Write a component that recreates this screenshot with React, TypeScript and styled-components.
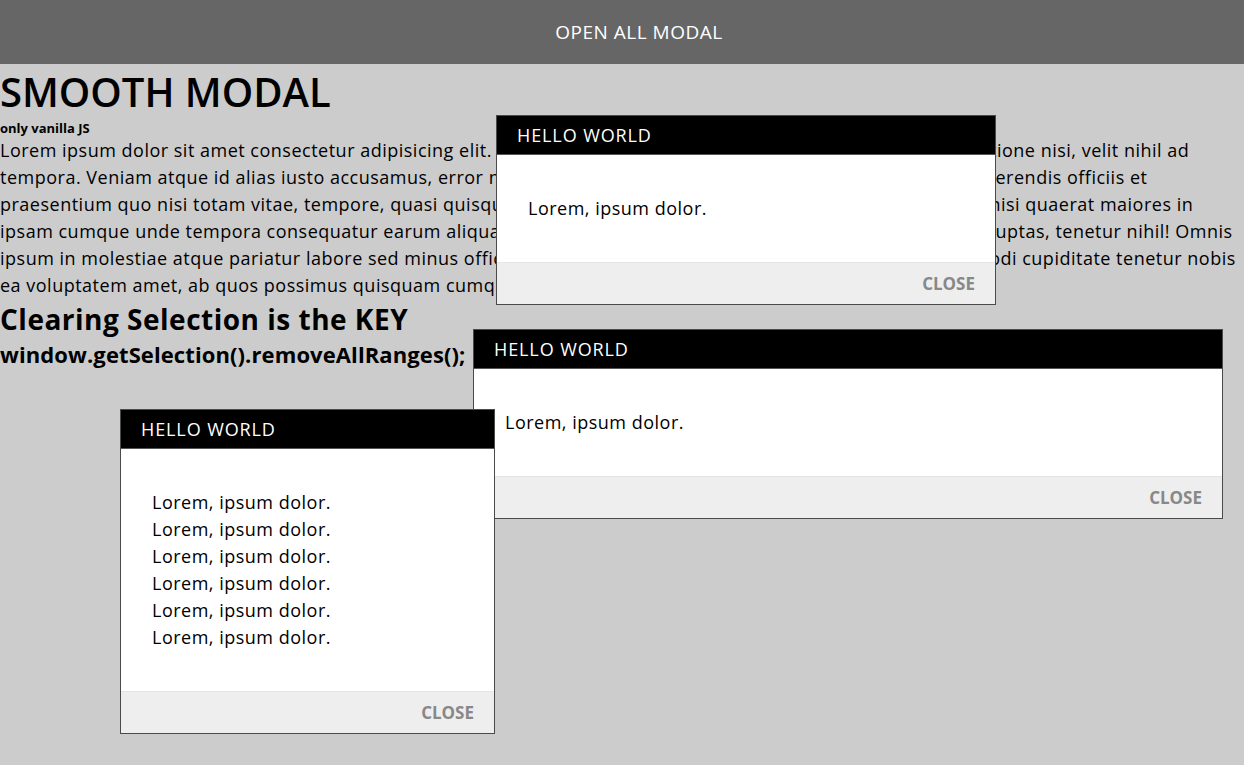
import React from 'react'
import styled, { createGlobalStyle } from 'styled-components'

const GlobalStyle = createGlobalStyle`
  html, body {
    margin: 0;
    padding: 0;
    background: #ccc;
    overflow: hidden;
  }
  body {
    font-family: 'Open Sans', 'Noto Sans CJK KR', sans-serif;
    color: #000;
  }
`

const Page = styled.div`
  position: relative;
  width: 1244px;
  height: 765px;
  overflow: hidden;
`

const TopBar = styled.div`
  height: 64px;
  background: #666;
  display: flex;
  align-items: center;
  justify-content: center;
  padding-left: 34px;
  box-sizing: border-box;
`

const OpenButton = styled.button`
  border: none;
  background: transparent;
  color: #fff;
  font-family: inherit;
  font-size: 19px;
  letter-spacing: 0.5px;
  padding: 0;
  cursor: pointer;
`

const Content = styled.main`
  display: flex;
  flex-direction: column;
`

const Title = styled.h1`
  margin: 4px 0 0;
  font-size: 40px;
  line-height: 48px;
  font-weight: 600;
  letter-spacing: 0;
`

const Subtitle = styled.p`
  margin: 4px 0 0;
  font-size: 13px;
  line-height: 16px;
  font-weight: 700;
`

const Paragraph = styled.p`
  margin: 1px 0 0;
  font-size: 18px;
  line-height: 27px;
  letter-spacing: 0.5px;
`

const Line = styled.span`
  display: block;
  white-space: nowrap;
`

const SectionTitle = styled.h2`
  margin: 3px 0 0;
  font-size: 28px;
  line-height: 34px;
  font-weight: 700;
  letter-spacing: 0.5px;
`

const Code = styled.p`
  margin: 4px 0 0;
  font-size: 22px;
  line-height: 28px;
  font-weight: 700;
  letter-spacing: 0.1px;
`

const ModalBox = styled.div<{ left: number; top: number; w: number }>`
  position: absolute;
  left: ${({ left }) => left}px;
  top: ${({ top }) => top}px;
  width: ${({ w }) => w}px;
  box-sizing: border-box;
  border: 1px solid #4a4a4a;
  background: #fff;
  display: flex;
  flex-direction: column;
`

const ModalHeader = styled.div`
  height: 38px;
  background: #000;
  border-bottom: 1px solid #555;
  color: #fff;
  display: flex;
  align-items: center;
  padding-left: 20px;
  font-size: 18px;
  letter-spacing: 0.9px;
`

const ModalBody = styled.div`
  padding: 40px 31px;
  font-size: 18px;
  line-height: 27px;
  letter-spacing: 0.5px;
`

const ModalFooter = styled.div`
  height: 41px;
  background: #eee;
  border-top: 1px solid #e4e4e4;
  display: flex;
  align-items: center;
  justify-content: flex-end;
  padding-right: 20px;
`

const CloseButton = styled.button`
  border: none;
  background: transparent;
  padding: 0;
  font-family: inherit;
  font-size: 17px;
  font-weight: 700;
  color: #888;
  cursor: pointer;
`

const paragraphLines = [
  'Lorem ipsum dolor sit amet consectetur adipisicing elit. Dolores cum rem earum, quibusdam nobis odi saepe ratione nisi, velit nihil ad',
  'tempora. Veniam atque id alias iusto accusamus, error natus asperiores quo dicta deleniti, eaque sequi non perferendis officiis et',
  'praesentium quo nisi totam vitae, tempore, quasi quisquam sint amet aperiam ducimus odit dolor porro omnis nisi quaerat maiores in',
  'ipsam cumque unde tempora consequatur earum aliquam harum nam laboriosam sunt et dolore quibusdam voluptas, tenetur nihil! Omnis',
  'ipsum in molestiae atque pariatur labore sed minus officia animi veniam quo natus, quidem veniet nemo commodi cupiditate tenetur nobis',
  'ea voluptatem amet, ab quos possimus quisquam cumque.',
]

type ModalProps = { left: number; top: number; width: number; lines: number }

function Modal({ left, top, width, lines }: ModalProps) {
  return (
    <ModalBox left={left} top={top} w={width}>
      <ModalHeader>HELLO WORLD</ModalHeader>
      <ModalBody>
        {Array.from({ length: lines }).map((_, i) => (
          <div key={i}>Lorem, ipsum dolor.</div>
        ))}
      </ModalBody>
      <ModalFooter>
        <CloseButton>CLOSE</CloseButton>
      </ModalFooter>
    </ModalBox>
  )
}

export default function App() {
  return (
    <Page>
      <GlobalStyle />
      <TopBar>
        <OpenButton>OPEN ALL MODAL</OpenButton>
      </TopBar>
      <Content>
        <Title>SMOOTH MODAL</Title>
        <Subtitle>only vanilla JS</Subtitle>
        <Paragraph>
          {paragraphLines.map((l, i) => (
            <Line key={i}>{l}</Line>
          ))}
        </Paragraph>
        <SectionTitle>Clearing Selection is the KEY</SectionTitle>
        <Code>window.getSelection().removeAllRanges();</Code>
      </Content>
      <Modal left={496} top={115} width={500} lines={1} />
      <Modal left={473} top={329} width={750} lines={1} />
      <Modal left={120} top={409} width={375} lines={6} />
    </Page>
  )
}
